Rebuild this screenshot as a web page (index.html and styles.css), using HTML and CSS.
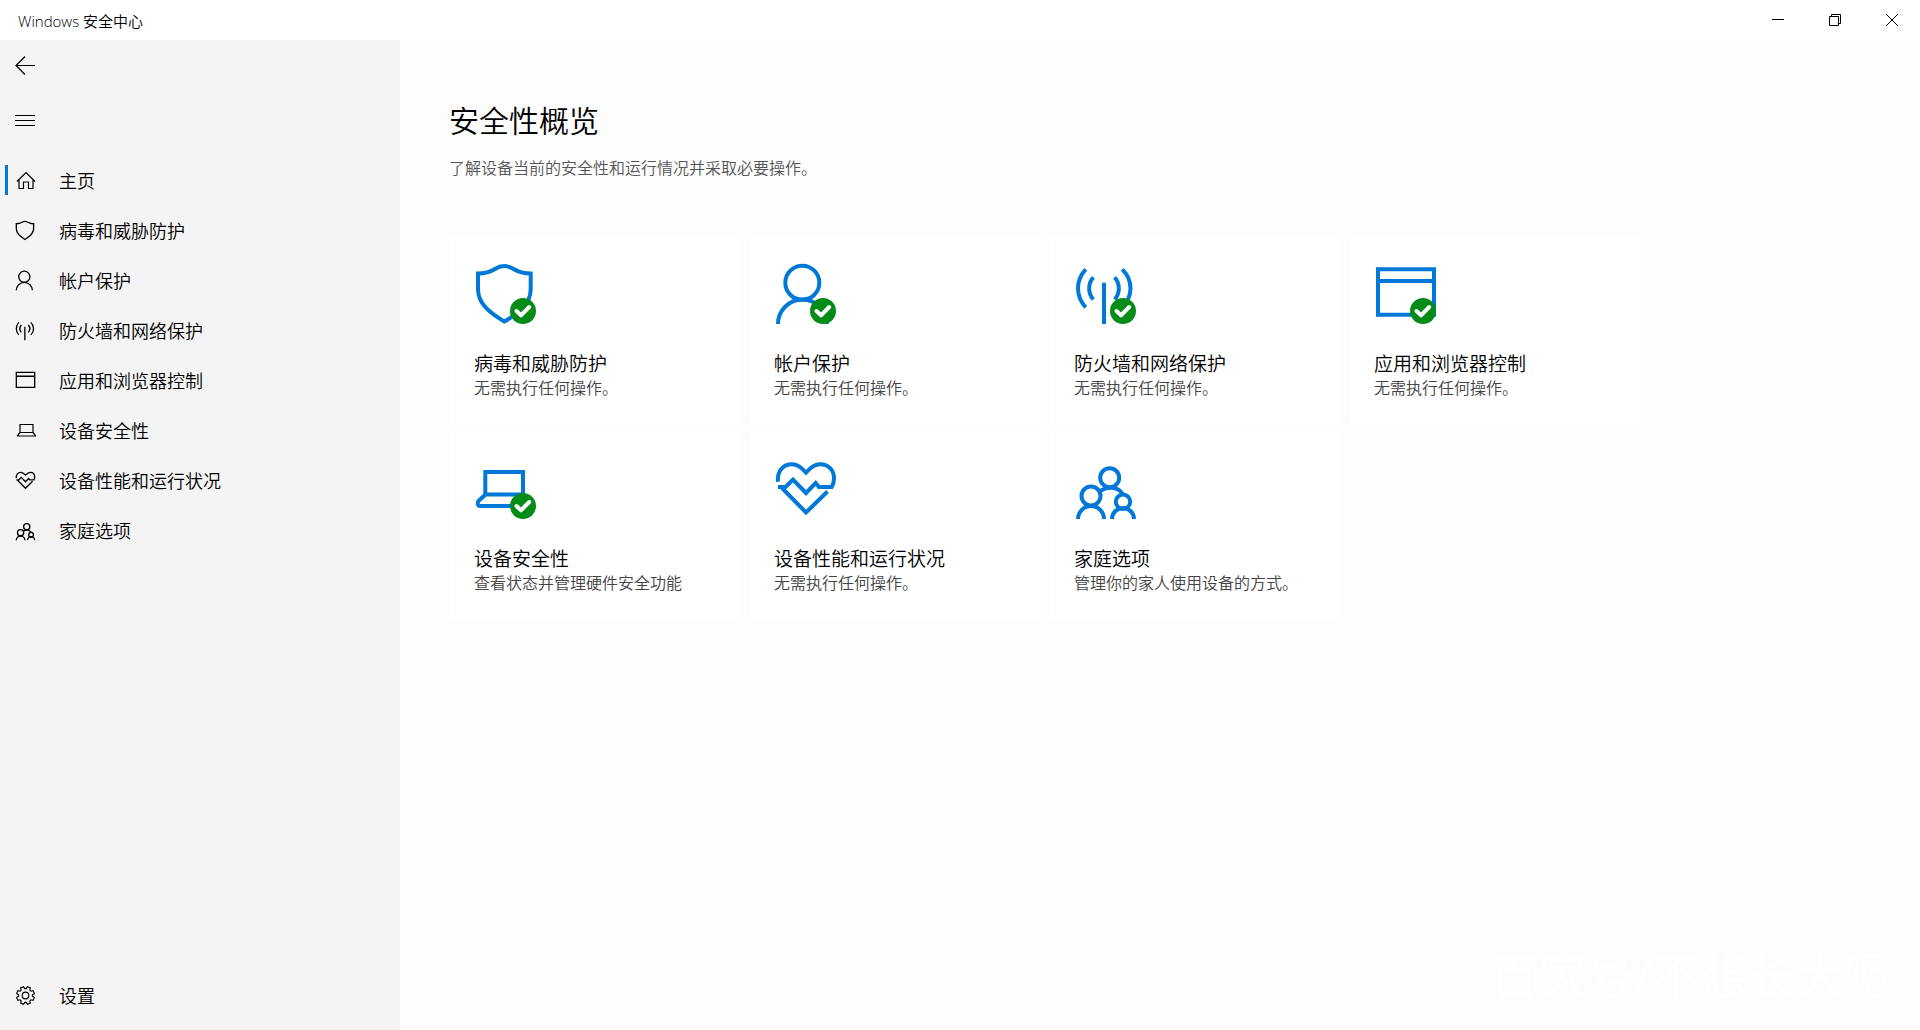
FILE: index.html
```html
<!DOCTYPE html>
<html lang="zh-CN">
<head>
    <meta charset="UTF-8">
    <meta name="viewport" content="width=device-width, initial-scale=1.0">
    <title>Windows 安全中心</title>
    <link rel="stylesheet" href="styles.css">
</head>
<body>
    <!-- Shared icons -->
    <svg class="symbols" aria-hidden="true">
        <symbol id="shield" viewBox="0 0 64 64">
            <path d="M4 11.5C13 11.5 17 9.5 21 7C24 5 27 4 30 4S36 5 39.5 7C43.500 9.500 47.500 11.500 56.700 11.500V27C56.700 42 45 51 30.300 59.500C16 51 4 42 4 27Z"/>
        </symbol>
        <symbol id="person" viewBox="0 0 64 64">
            <circle cx="28.300" cy="20.700" r="17"/>
            <path d="M4 62A24.400 24.400 0 0 1 52.800 62"/>
        </symbol>
        <symbol id="antenna" viewBox="0 0 64 64">
            <path d="M30 20.700V62M11.700 7.300Q4 15.500 4 26.300T11.700 45.300M19.300 15.300C13.800 22 13.800 31 19.300 37.500M48.300 7.300Q56.500 15.500 56.500 26.300T48.300 45.300M40.700 15.300C46.200 22 46.200 31 40.700 37.500"/>
        </symbol>
        <symbol id="window" viewBox="0 0 64 64">
            <path d="M4 7.300H60V52.700H4ZM4 19H60"/>
        </symbol>
        <symbol id="heart" viewBox="0 0 64 64">
            <path d="M4 24.700C3 14 9 7.300 18 7.300C23 7.300 26 9.500 32 15.700C38 9.500 41 7.300 46 7.300C55 7.300 60 13.500 60 21.300C60 25 59 28 57.700 30H45L41.700 26L32 36L19 22.500L11 30.500M4 30H12M8 31L32 55.500L53.500 34.500"/>
        </symbol>
        <symbol id="family" viewBox="0 0 64 64">
            <circle cx="35.700" cy="20.700" r="9.500"/>
            <circle cx="17" cy="39" r="9.500"/>
            <circle cx="49" cy="44.700" r="7.200"/>
            <path d="M4 62A13 13 0 0 1 30 62M38 62A11 11 0 0 1 60 62M25 35C32 29 44 29 48.500 37"/>
        </symbol>
        <symbol id="badge" viewBox="0 0 26 26">
            <circle class="badge-disc" cx="13" cy="13" r="13"/>
            <path class="badge-tick" d="M6.500 13L11 17.300L19.200 9"/>
        </symbol>
    </svg>

    <header class="titlebar">
        <span>Windows 安全中心</span>
        <div class="window-controls">
            <button type="button" aria-label="最小化">
                <svg width="12" height="12" viewBox="0 0 12 12"><path d="M0 5.500H12"/></svg>
            </button>
            <button type="button" aria-label="还原">
                <svg width="12" height="12" viewBox="0 0 12 12"><path d="M.5 2.500H9.500V11.500H.5ZM2.500 2.500V.5H11.500V9.500H9.500"/></svg>
            </button>
            <button type="button" aria-label="关闭">
                <svg width="12" height="12" viewBox="0 0 12 12"><path d="M0 0L12 12M12 0L0 12"/></svg>
            </button>
        </div>
    </header>

    <div class="layout">
        <aside class="sidebar">
            <button class="side-button" type="button" aria-label="返回">
                <svg width="21" height="21" viewBox="0 0 21 21"><path d="M1 10.500H20M10 1.500L1 10.500L10 19.500"/></svg>
            </button>
            <button class="side-button" type="button" aria-label="菜单">
                <svg width="21" height="21" viewBox="0 0 21 21"><path class="thin" d="M0 5.500H20M0 10.500H20M0 15.500H20"/></svg>
            </button>
            <nav class="nav">
                <a class="nav-link active" href="#home">
                    <svg class="nav-icon" viewBox="0 0 21 21"><path class="line" d="M2 11.500L11 2.500L20 11.500M4 9.500V18.500H8.500V12H13.500V18.500H18V9.500"/></svg>
                    主页
                </a>
                <a class="nav-link" href="#virus">
                    <svg class="nav-icon"><use href="#shield"/></svg>
                    病毒和威胁防护
                </a>
                <a class="nav-link" href="#account">
                    <svg class="nav-icon"><use href="#person"/></svg>
                    帐户保护
                </a>
                <a class="nav-link" href="#firewall">
                    <svg class="nav-icon"><use href="#antenna"/></svg>
                    防火墙和网络保护
                </a>
                <a class="nav-link" href="#apps">
                    <svg class="nav-icon"><use href="#window"/></svg>
                    应用和浏览器控制
                </a>
                <a class="nav-link" href="#device">
                    <svg class="nav-icon" viewBox="0 0 21 21"><path class="line" d="M5 4.500H18V12.500H5ZM5 12.500L2.500 15.500V16H20.500V15.500L18 12.500"/></svg>
                    设备安全性
                </a>
                <a class="nav-link" href="#health">
                    <svg class="nav-icon"><use href="#heart"/></svg>
                    设备性能和运行状况
                </a>
                <a class="nav-link" href="#family-options">
                    <svg class="nav-icon"><use href="#family"/></svg>
                    家庭选项
                </a>
                <a class="nav-link settings" href="#settings">
                    <svg class="nav-icon" viewBox="0 0 22 22">
                        <path class="line" d="M18.200 11.800L20.300 13.100L19 16.100L16.700 15.500L15.500 16.700L16.100 19L13.100 20.300L11.800 18.200H10.200L8.900 20.300L5.900 19L6.500 16.700L5.300 15.500L3 16.100L1.700 13.100L3.800 11.800V10.200L1.700 8.900L3 5.900L5.300 6.500L6.500 5.300L5.900 3L8.900 1.700L10.200 3.800H11.800L13.100 1.700L16.100 3L15.500 5.300L16.700 6.500L19 5.900L20.300 8.900L18.200 10.200Z"/>
                        <circle class="line" cx="11" cy="11" r="3.500"/>
                    </svg>
                    设置
                </a>
            </nav>
        </aside>

        <main class="content">
            <h1>安全性概览</h1>
            <p class="intro">了解设备当前的安全性和运行情况并采取必要操作。</p>

            <div class="tiles">
                <a class="tile" href="#virus">
                    <svg class="tile-icon" viewBox="0 0 64 64">
                        <use href="#shield"/>
                        <use href="#badge" x="36" y="36" width="26" height="26"/>
                    </svg>
                    <h2>病毒和威胁防护</h2>
                    <p>无需执行任何操作。</p>
                </a>
                <a class="tile" href="#account">
                    <svg class="tile-icon" viewBox="0 0 64 64">
                        <use href="#person"/>
                        <use href="#badge" x="36" y="36" width="26" height="26"/>
                    </svg>
                    <h2>帐户保护</h2>
                    <p>无需执行任何操作。</p>
                </a>
                <a class="tile" href="#firewall">
                    <svg class="tile-icon" viewBox="0 0 64 64">
                        <use href="#antenna"/>
                        <use href="#badge" x="36" y="36" width="26" height="26"/>
                    </svg>
                    <h2>防火墙和网络保护</h2>
                    <p>无需执行任何操作。</p>
                </a>
                <a class="tile" href="#apps">
                    <svg class="tile-icon" viewBox="0 0 64 64">
                        <use href="#window"/>
                        <use href="#badge" x="36" y="36" width="26" height="26"/>
                    </svg>
                    <h2>应用和浏览器控制</h2>
                    <p>无需执行任何操作。</p>
                </a>
                <a class="tile" href="#device">
                    <svg class="tile-icon" viewBox="0 0 64 64">
                        <path d="M11.300 37.500V15H49V37.500ZM11 38L5 43.500C3 45.500 3.500 49 6 49H49"/>
                        <use href="#badge" x="36" y="36" width="26" height="26"/>
                    </svg>
                    <h2>设备安全性</h2>
                    <p>查看状态并管理硬件安全功能</p>
                </a>
                <a class="tile" href="#health">
                    <svg class="tile-icon" viewBox="0 0 64 64"><use href="#heart"/></svg>
                    <h2>设备性能和运行状况</h2>
                    <p>无需执行任何操作。</p>
                </a>
                <a class="tile" href="#family-options">
                    <svg class="tile-icon" viewBox="0 0 64 64"><use href="#family"/></svg>
                    <h2>家庭选项</h2>
                    <p>管理你的家人使用设备的方式。</p>
                </a>
            </div>
            <div class="watermark">百家号/不想长大嗯</div>
        </main>
    </div>
</body>
</html>
```
FILE: styles.css
```css
* {
    box-sizing: border-box;
}
body {
    margin: 0;
    min-height: 100vh;
    display: flex;
    flex-direction: column;
    font-family: "Open Sans", "Noto Sans CJK SC", sans-serif;
    font-weight: 350;
    color: #000;
    background-color: #fff;
}
h1, h2, p {
    margin: 0;
    font-weight: 350;
}
a {
    color: inherit;
    text-decoration: none;
}
button {
    padding: 0;
    border: none;
    background: none;
    color: inherit;
}
svg {
    display: block;
    fill: none;
    stroke: currentColor;
}
.symbols {
    position: absolute;
    width: 0;
    height: 0;
}

/* Title bar */
.titlebar {
    display: flex;
    justify-content: space-between;
    align-items: center;
    height: 40px;
    padding-left: 18px;
    font-size: 15px;
}
.window-controls {
    display: flex;
    height: 100%;
}
.window-controls button {
    display: flex;
    justify-content: center;
    align-items: center;
    width: 57px;
}
.window-controls button:hover,
.side-button:hover,
.nav-link:hover {
    background-color: #e5e5e5;
}

.layout {
    flex: 1;
    display: flex;
}

/* Sidebar */
.sidebar {
    display: flex;
    flex-direction: column;
    gap: 5px;
    width: 400px;
    padding-bottom: 10px;
    background-color: #f4f4f4;
}
.side-button {
    display: flex;
    align-items: center;
    width: 50px;
    height: 50px;
    padding-left: 15px;
}
.side-button svg {
    stroke-width: 1.2;
}
.side-button .thin {
    stroke-width: 1;
}
.nav {
    flex: 1;
    display: flex;
    flex-direction: column;
    padding-top: 5px;
}
.nav-link {
    display: flex;
    align-items: center;
    gap: 23px;
    height: 50px;
    padding-left: 15px;
    font-size: 18px;
}
.nav-icon {
    width: 21px;
    height: 21px;
    stroke-width: 4;
}
.nav-icon .line {
    stroke-width: 1.2;
}
.active {
    position: relative;
}
.active::before {
    content: "";
    position: absolute;
    left: 5px;
    top: 10px;
    width: 3px;
    height: 30px;
    background-color: #0078d7;
}
.settings {
    margin-top: auto;
}

/* Main area */
.content {
    position: relative;
    flex: 1;
    padding: 60px 0 40px 49px;
    background-color: #fdfdfd;
}
h1 {
    font-size: 30px;
    line-height: 42px;
}
.intro {
    margin-top: 16px;
    font-size: 16px;
    line-height: 20px;
    color: #555;
}
.tiles {
    display: grid;
    grid-template-columns: repeat(auto-fill, 290px);
    gap: 10px;
    margin: 60px 0 0 1px;
}
.tile {
    padding: 24px 24px 23px;
    background-color: #fff;
}
.tile-icon {
    width: 64px;
    height: 64px;
    margin-bottom: 26px;
    color: #0078d7;
    stroke-width: 4;
}
.badge-disc {
    fill: #058b17;
    stroke: none;
}
.badge-tick {
    stroke: #fff;
    stroke-linecap: round;
    stroke-linejoin: round;
}
.tile h2 {
    font-size: 19px;
    line-height: 24px;
}
.tile p {
    font-size: 16px;
    line-height: 24px;
    color: #444;
}
.watermark {
    position: absolute;
    right: 28px;
    bottom: 24px;
    font-size: 48px;
    font-weight: 400;
    line-height: 60px;
    color: #fff;
}
```
